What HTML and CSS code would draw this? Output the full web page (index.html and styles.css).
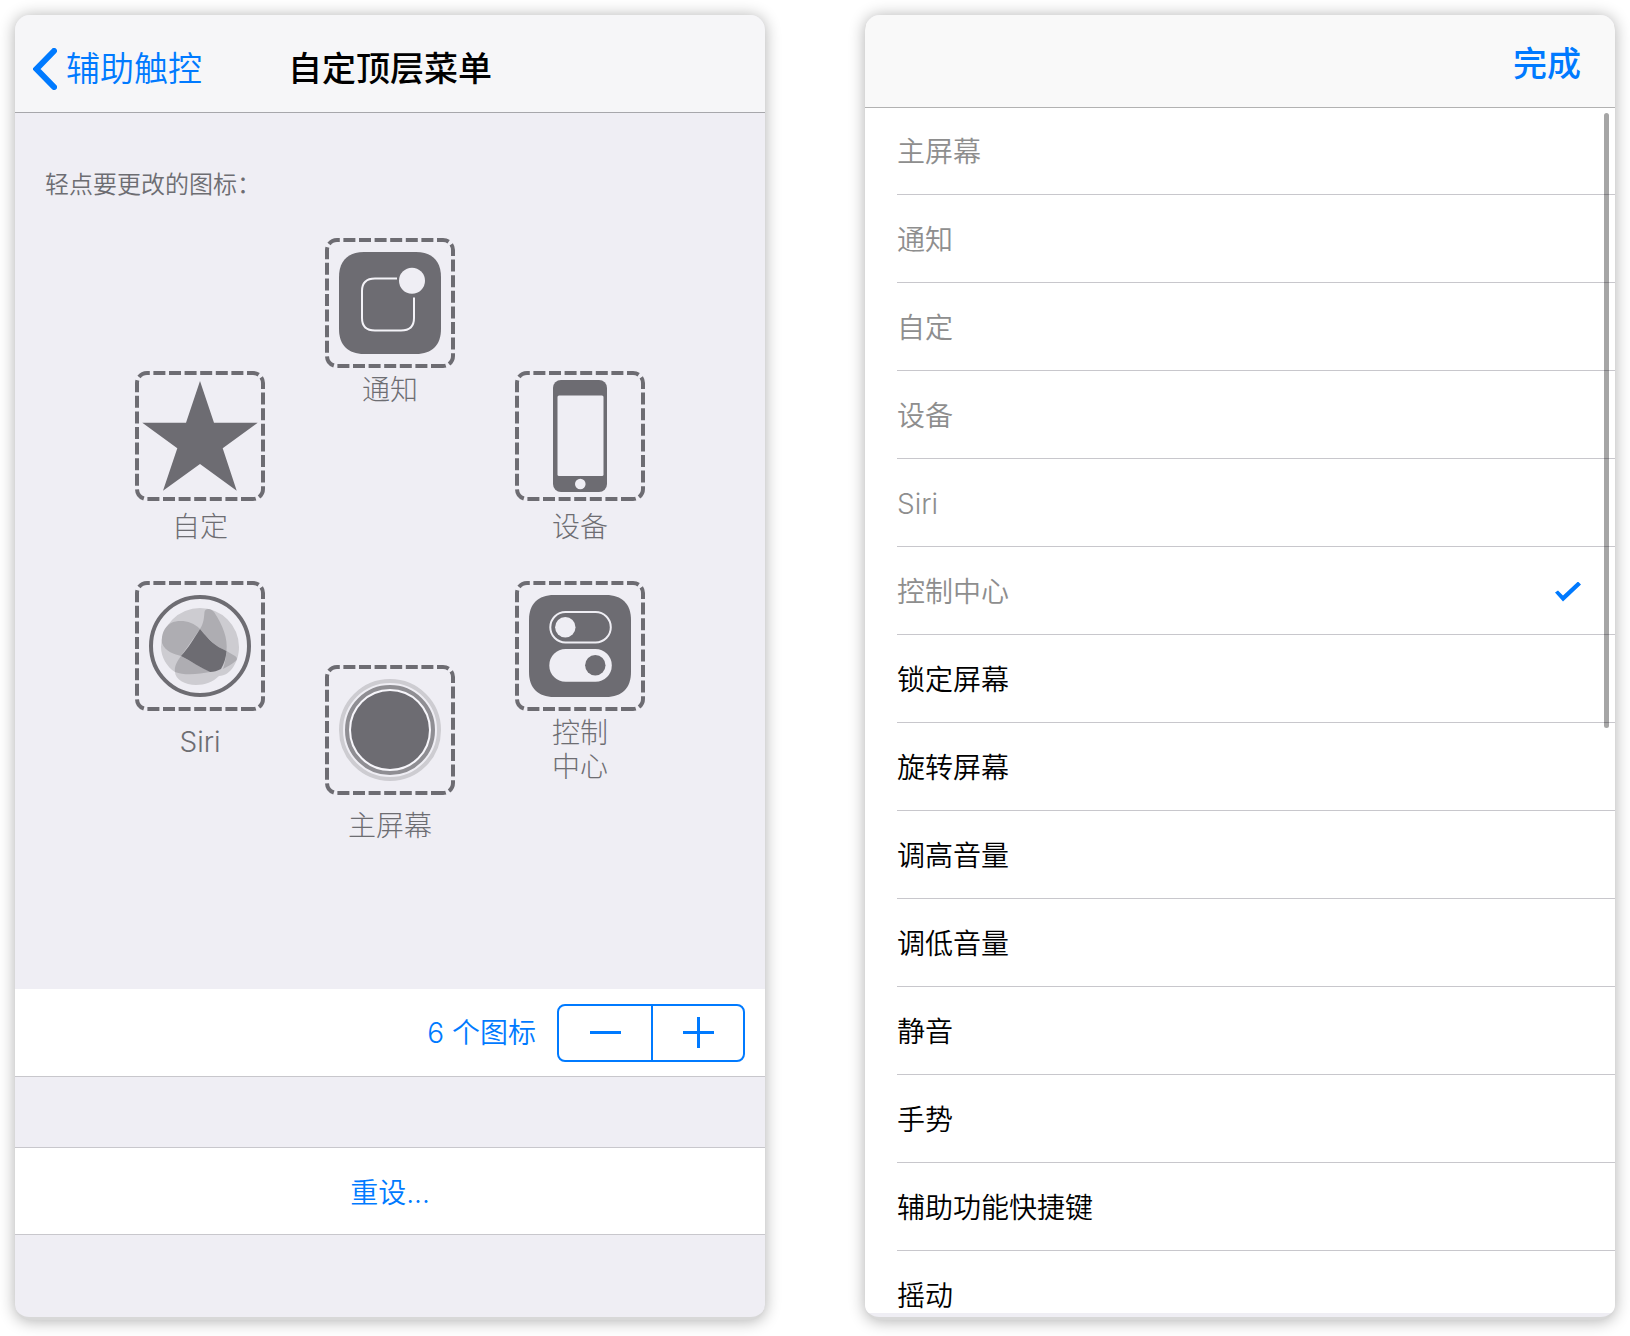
FILE: index.html
```html
<!DOCTYPE html>
<html lang="zh-CN">
<head>
<meta charset="utf-8">
<meta name="viewport" content="width=device-width, initial-scale=1">
<title>自定顶层菜单</title>
<link rel="stylesheet" href="styles.css">
</head>
<body>
<svg class="defs" aria-hidden="true">
  <symbol id="frame" viewBox="0 0 130 130">
    <path d="M118 128H12A10 10 0 0 1 2 118V12A10 10 0 0 1 12 2H118A10 10 0 0 1 128 12V118A10 10 0 0 1 118 128" fill="none" stroke="#6d6c72" stroke-width="4" stroke-dasharray="12 3.6"/>
  </symbol>
</svg>
<div class="page">
  <main class="panel settings">
    <header class="bar bar-settings">
      <a class="back" href="#">
        <svg class="chevron" width="24" height="42" viewBox="0 0 24 42" aria-hidden="true"><path d="M21 3L3.500 21L21 39" fill="none" stroke="#007aff" stroke-width="6" stroke-linecap="round" stroke-linejoin="miter"/></svg>
        <span>辅助触控</span>
      </a>
      <h1 class="title">自定顶层菜单</h1>
    </header>
    <section class="canvas">
      <p class="hint">轻点要更改的图标：</p>
      <div class="icons">
        <div class="column side">
          <button class="item" type="button">
            <svg class="glyph" viewBox="0 0 130 130" aria-hidden="true"><use href="#frame"/><path fill="#6d6c72" d="M65 10L79 51.700H122.700L87.700 77.300L101.700 119.700L65 93L28 119.700L42.300 77.300L7.300 51.700H51Z"/></svg>
            <span class="label mid">自定</span>
          </button>
          <button class="item" type="button">
            <svg class="glyph" viewBox="0 0 130 130" aria-hidden="true"><use href="#frame"/>
              <circle cx="65" cy="65" r="49" fill="none" stroke="#6d6c72" stroke-width="4"/>
              <path fill="#cdccd1" d="M26 66A39 39 0 0 1 104 66C104 80 96 95 84 95C78 101 70 104 61 104C50 104 40 98 40 91C32 86 26 76 26 66Z"/>
              <g fill="#aeadb2">
                <path d="M65 48C57 40 45 38 36 42C29 46 26 54 27 62C30 71 40 73 46 75Z"/>
                <path d="M65 48C69 42 69 36 69.500 31C70 27 76 27 79 31C88 44 93 58 91.500 70C82 66 76 61 65 48Z"/>
                <path d="M46 75C42 80 39 86 40 91C50 95 65 93 75 91Z"/>
                <path d="M91.500 70L100 75C103 77 102 79 100 80.500C97 83 92 86 88 88C90 82 91 76 91.500 70Z"/>
              </g>
              <path fill="#6d6c72" d="M65 48C75 60 80 65 91.500 70C91 77 89 83 86 88C82 90 79 91 75 91C66 87 56 80 46 75C54 66 58 59 65 48Z"/>
            </svg>
            <span class="label far">Siri</span>
          </button>
        </div>
        <div class="column center">
          <button class="item" type="button">
            <svg class="glyph" viewBox="0 0 130 130" aria-hidden="true"><use href="#frame"/>
              <path fill="#6d6c72" d="M39 14H91C107 14 116 23 116 39V91C116 107 107 116 91 116H39C23 116 14 107 14 91V39C14 23 23 14 39 14Z"/>
              <path d="M72 40.500H50Q37 40.500 37 53V80Q37 92.500 50 92.500H76Q89 92.500 89 80V59.500" fill="none" stroke="#f4f3f8" stroke-width="2"/>
              <circle cx="87" cy="42.700" r="13" fill="#efeef4"/>
            </svg>
            <span class="label">通知</span>
          </button>
          <button class="item" type="button">
            <svg class="glyph" viewBox="0 0 130 130" aria-hidden="true"><use href="#frame"/>
              <circle cx="65" cy="65" r="49" fill="none" stroke="#cdccd1" stroke-width="4"/>
              <circle cx="65" cy="65" r="43" fill="#f7f6fb" stroke="#8f8e93" stroke-width="4"/>
              <circle cx="65" cy="65" r="39" fill="#6d6c72"/>
            </svg>
            <span class="label far">主屏幕</span>
          </button>
        </div>
        <div class="column side">
          <button class="item" type="button">
            <svg class="glyph" viewBox="0 0 130 130" aria-hidden="true"><use href="#frame"/>
              <rect x="38" y="9" width="54" height="112" rx="8" fill="#6d6c72"/>
              <rect x="42.500" y="24.500" width="46" height="80.500" rx="1.500" fill="#efeef4"/>
              <circle cx="65.300" cy="113" r="5.300" fill="#efeef4"/>
            </svg>
            <span class="label mid">设备</span>
          </button>
          <button class="item" type="button">
            <svg class="glyph" viewBox="0 0 130 130" aria-hidden="true"><use href="#frame"/>
              <path fill="#6d6c72" d="M39 14H91C107 14 116 23 116 39V91C116 107 107 116 91 116H39C23 116 14 107 14 91V39C14 23 23 14 39 14Z"/>
              <rect x="35.300" y="31" width="60.500" height="30.500" rx="15.200" fill="none" stroke="#efeef4" stroke-width="2"/>
              <circle cx="50.300" cy="46.200" r="10.200" fill="#efeef4"/>
              <rect x="34.300" y="68" width="62.500" height="32.700" rx="16.300" fill="#efeef4"/>
              <circle cx="80.300" cy="84.300" r="10.200" fill="#6d6c72"/>
            </svg>
            <span class="label">控制<br>中心</span>
          </button>
        </div>
      </div>
    </section>
    <section class="cell count">
      <span>6 个图标</span>
      <div class="stepper">
        <button type="button" aria-label="减少"><svg width="31" height="31" viewBox="0 0 31 31" aria-hidden="true"><path d="M0 15.500H31" stroke="#007aff" stroke-width="3"/></svg></button>
        <button type="button" aria-label="增加"><svg width="31" height="31" viewBox="0 0 31 31" aria-hidden="true"><path d="M0 15.500H31M15.500 0V31" stroke="#007aff" stroke-width="3"/></svg></button>
      </div>
    </section>
    <button class="cell reset" type="button">重设...</button>
  </main>

  <section class="panel picker">
    <header class="bar bar-picker">
      <button class="done" type="button">完成</button>
    </header>
    <div class="scroller">
      <ul class="options">
        <li><label class="option used">主屏幕<input type="radio" name="action"></label></li>
        <li><label class="option used">通知<input type="radio" name="action"></label></li>
        <li><label class="option used">自定<input type="radio" name="action"></label></li>
        <li><label class="option used">设备<input type="radio" name="action"></label></li>
        <li><label class="option used">Siri<input type="radio" name="action"></label></li>
        <li><label class="option used">控制中心<input type="radio" name="action" checked></label></li>
        <li><label class="option">锁定屏幕<input type="radio" name="action"></label></li>
        <li><label class="option">旋转屏幕<input type="radio" name="action"></label></li>
        <li><label class="option">调高音量<input type="radio" name="action"></label></li>
        <li><label class="option">调低音量<input type="radio" name="action"></label></li>
        <li><label class="option">静音<input type="radio" name="action"></label></li>
        <li><label class="option">手势<input type="radio" name="action"></label></li>
        <li><label class="option">辅助功能快捷键<input type="radio" name="action"></label></li>
        <li><label class="option">摇动<input type="radio" name="action"></label></li>
      </ul>
      <div class="thumb"></div>
    </div>
  </section>
</div>
</body>
</html>
```
FILE: styles.css
```css
* {
  box-sizing: border-box;
}

body {
  margin: 0;
  background: #fff;
  color: #000;
  font-family: Inter, "Noto Sans CJK SC", sans-serif;
  font-size: 28px;
  font-weight: 350;
  line-height: 34px;
}

button {
  margin: 0;
  padding: 0;
  border: 0;
  background: none;
  color: inherit;
  font: inherit;
  cursor: pointer;
}

.defs {
  position: absolute;
  width: 0;
  height: 0;
}

.page {
  display: grid;
  grid-template-columns: 1fr 1fr;
  grid-template-rows: minmax(0, 1fr);
  gap: 100px;
  height: 100vh;
  padding: 15px 15px 16px;
}

.panel {
  display: flex;
  flex-direction: column;
  min-width: 0;
  overflow: hidden;
  border-bottom: 3px solid #d8d8d8;
  border-radius: 15px;
  background: #efeef4;
  box-shadow: 0 1px 16px rgba(0, 0, 0, 0.32);
}

.bar {
  display: grid;
  flex: none;
  align-items: center;
  font-size: 34px;
  line-height: 40px;
}

.bar-settings {
  grid-template-columns: 1fr auto 1fr;
  height: 98px;
  padding: 10px 18px 0;
  border-bottom: 1px solid #a7a7ab;
  background: #f6f6f8;
}

.back {
  display: flex;
  align-items: center;
  gap: 9px;
  color: #007aff;
  text-decoration: none;
}

.chevron {
  flex: none;
}

.title {
  margin: 0;
  font-size: 34px;
  font-weight: 500;
}

.canvas {
  flex: 1;
  padding-top: 56px;
}

.hint {
  margin: 0 0 37px;
  padding-left: 30px;
  color: #6d6d72;
  font-size: 24px;
  line-height: 32px;
}

.icons {
  display: flex;
  justify-content: center;
  gap: 60px;
}

.column {
  display: flex;
  flex-direction: column;
  width: 130px;
}

.side {
  padding-top: 133px;
}

.item {
  display: flex;
  flex-direction: column;
  align-items: center;
}

.side .item {
  height: 210px;
}

.center .item {
  height: 427px;
}

.center .item:last-child {
  height: auto;
}

.glyph {
  flex: none;
  width: 130px;
  height: 130px;
}

.label {
  margin-top: 5px;
  color: #6d6d72;
  font-weight: 300;
}

.label.mid {
  margin-top: 9px;
}

.label.far {
  margin-top: 14px;
}

.cell {
  flex: none;
  height: 88px;
  border-bottom: 1px solid #c8c7cc;
  background: #fff;
  color: #007aff;
}

.count {
  display: flex;
  align-items: center;
  justify-content: flex-end;
  gap: 21px;
  margin-bottom: 70px;
  padding-right: 20px;
}

.stepper {
  display: grid;
  grid-template-columns: 1fr 1fr;
  width: 188px;
  height: 58px;
  border: 2px solid #007aff;
  border-radius: 8px;
}

.stepper button {
  display: grid;
  place-items: center;
}

.stepper button + button {
  border-left: 2px solid #007aff;
}

.reset {
  margin-bottom: 82px;
  padding-top: 4px;
  border-top: 1px solid #c8c7cc;
}

.bar-picker {
  position: relative;
  z-index: 1;
  justify-content: end;
  height: 92px;
  padding: 6px 34px 0 0;
  background: #f9f9f9;
  box-shadow: 0 1px 0 #b2b2b2;
}

.done {
  color: #007aff;
  font-weight: 500;
}

.scroller {
  position: relative;
  flex: 1;
  min-height: 0;
  margin-bottom: 4px;
  overflow: hidden;
  background: #fff;
}

.options {
  margin: 0;
  padding: 0 0 0 32px;
  list-style: none;
}

.option {
  display: flex;
  align-items: center;
  justify-content: space-between;
  height: 88px;
  padding: 2px 34px 0 0;
  border-bottom: 1px solid #c8c7cc;
}

.used {
  color: #8e8e8e;
}

.option input {
  width: 26px;
  height: 20px;
  margin: 0;
  appearance: none;
}

.option input:checked {
  background: #007aff;
  clip-path: polygon(0 11px, 3px 9px, 8px 14px, 23px 0, 26px 3px, 8px 20px);
}

.thumb {
  position: absolute;
  top: 6px;
  right: 6px;
  width: 5px;
  height: 51%;
  border-radius: 3px;
  background: rgba(0, 0, 0, 0.35);
}
```
